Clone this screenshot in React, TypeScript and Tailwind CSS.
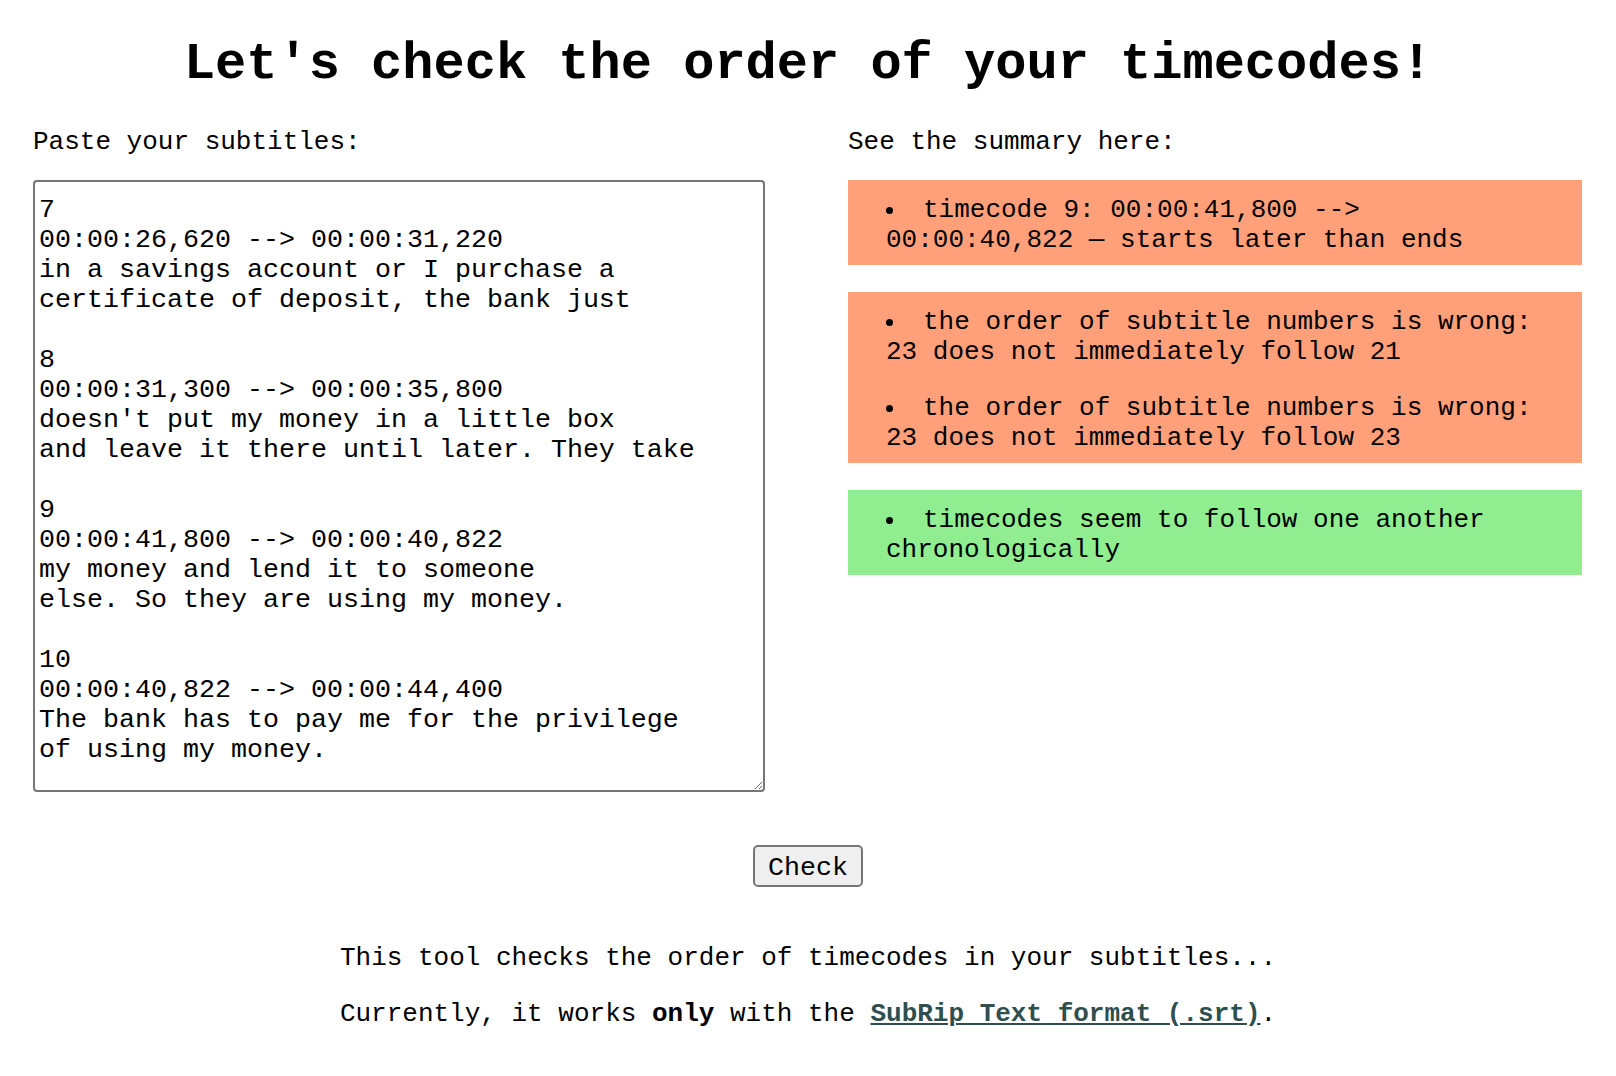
const subtitles = `7
00:00:26,620 --> 00:00:31,220
in a savings account or I purchase a
certificate of deposit, the bank just

8
00:00:31,300 --> 00:00:35,800
doesn't put my money in a little box
and leave it there until later. They take

9
00:00:41,800 --> 00:00:40,822
my money and lend it to someone
else. So they are using my money.

10
00:00:40,822 --> 00:00:44,400
The bank has to pay me for the privilege
of using my money.`;

const Bullet = () => (
  <span className="inline-block size-[7px] rounded-full bg-black mr-[30px] align-middle" />
);

const SummaryBox = ({ items = [] as string[], ok = false }) => {
  return (
    <ul
      className={`flex flex-col gap-[26px] pl-[38px] pr-[38px] pt-[15px] pb-[10px] ${
        ok ? 'bg-[#90ee90]' : 'bg-[#ffa07a]'
      }`}
    >
      {items.map((item) => (
        <li key={item}>
          <Bullet />
          {item}
        </li>
      ))}
    </ul>
  );
};

const App = () => {
  return (
    <div className="min-h-screen bg-white text-black font-['Liberation_Mono','Courier_New',monospace] text-[26px] leading-[30px] pt-[35px] pb-[40px]">
      <h1 className="text-center text-[52px] leading-[59px] font-bold mb-[33px]">
        Let's check the order of your timecodes!
      </h1>

      <div className="grid grid-cols-[732px_734px] gap-x-[83px] px-[33px]">
        <div className="flex flex-col">
          <p className="mb-[23px]">Paste your subtitles:</p>
          <textarea
            defaultValue={subtitles}
            spellCheck={false}
            className="w-[732px] h-[612px] border-2 border-[#767676] rounded-[4px] bg-white text-[26.67px] leading-[30px] pt-[13px] px-[4px] outline-none"
          />
        </div>

        <div className="flex flex-col">
          <p className="mb-[23px]">See the summary here:</p>
          <div className="flex flex-col gap-[27px]">
            <SummaryBox items={['timecode 9: 00:00:41,800 --> 00:00:40,822 — starts later than ends']} />
            <SummaryBox
              items={[
                'the order of subtitle numbers is wrong: 23 does not immediately follow 21',
                'the order of subtitle numbers is wrong: 23 does not immediately follow 23'
              ]}
            />
            <SummaryBox ok items={['timecodes seem to follow one another chronologically']} />
          </div>
        </div>
      </div>

      <div className="flex justify-center mt-[53px]">
        <button
          type="button"
          className="w-[110px] h-[42px] border-2 border-[#767676] rounded-[5px] bg-[#efefef] text-[26.67px] leading-[30px] pt-[3px]"
        >
          Check
        </button>
      </div>

      <div className="flex flex-col items-center mt-[56px] gap-[26px]">
        <p>This tool checks the order of timecodes in your subtitles...</p>
        <p>
          Currently, it works <b>only</b> with the{' '}
          <a href="#" className="font-bold text-[#2f4f4f] underline">
            SubRip Text format (.srt)
          </a>
          .
        </p>
      </div>
    </div>
  );
};

export default App;
